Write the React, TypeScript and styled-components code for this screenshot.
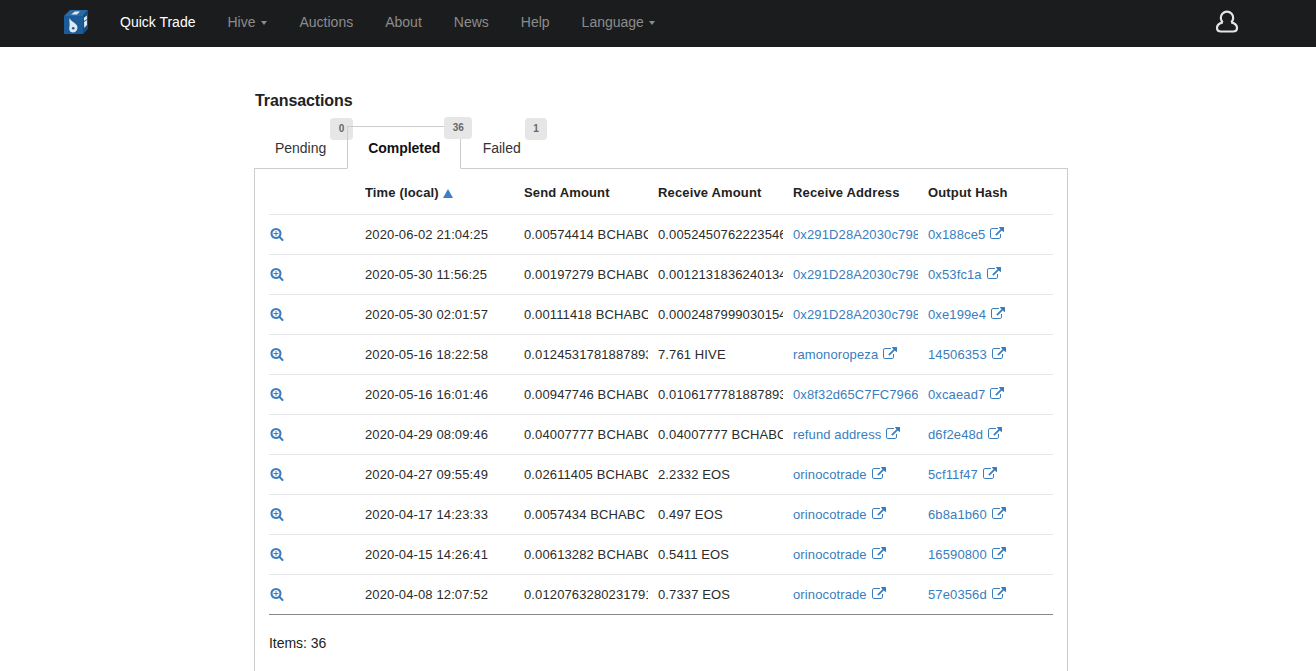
import styled, { createGlobalStyle } from 'styled-components';

const GlobalStyle = createGlobalStyle`
  html, body {
    margin: 0;
    height: 671px;
    overflow: hidden;
    background: #fff;
  }
  body {
    font-family: "Liberation Sans", Arial, sans-serif;
    font-size: 14px;
    line-height: 20px;
    color: #222;
  }
`;

const Navbar = styled.nav`
  display: flex;
  align-items: center;
  height: 47px;
  padding: 0 64px 3px;
  box-sizing: border-box;
  background-color: #1b1c1e;
`;
const Logo = styled.svg`
  width: 24px;
  height: 24px;
  margin: 0 16px 0 0;
  flex: none;
`;
const NavItem = styled.a<{ $active?: boolean }>`
  display: flex;
  align-items: center;
  padding: 0 16px;
  color: ${(p) => (p.$active ? '#fff' : '#8c8c8c')};
  white-space: nowrap;
`;
const Caret = styled.span`
  width: 0;
  height: 0;
  margin: 2px 1px 0 5px;
  border-left: 3px solid transparent;
  border-right: 3px solid transparent;
  border-top: 4px solid #8c8c8c;
`;
const UserIcon = styled.svg`
  width: 24px;
  height: 24px;
  margin-left: auto;
  margin-right: 13px;
  color: #e4e4e4;
`;

const Main = styled.main`
  width: 814px;
  margin-left: 254px;
  padding-top: 44px;
`;
const Title = styled.h4`
  margin: 0 0 15px;
  padding-left: 1px;
  font-size: 16px;
  line-height: 20px;
  font-weight: bold;
  letter-spacing: -0.1px;
  color: #222;
`;
const Tabs = styled.div`
  display: flex;
  height: 43px;
  margin-bottom: -1px;
`;
const Tab = styled.div<{ $active?: boolean }>`
  position: relative;
  padding: 11px 20px;
  margin-right: ${(p) => (p.$active ? '0.5px' : '0')};
  border: 1px solid ${(p) => (p.$active ? '#ccc' : 'transparent')};
  border-bottom: 1px solid ${(p) => (p.$active ? '#fff' : 'transparent')};
  letter-spacing: -0.03px;
  font-weight: ${(p) => (p.$active ? 'bold' : 'normal')};
  color: ${(p) => (p.$active ? '#111' : '#333')};
`;
const Badge = styled.span<{ $active?: boolean }>`
  position: absolute;
  left: calc(100% - 16px);
  top: ${(p) => (p.$active ? '-10px' : '-9px')};
  height: 22px;
  padding: 0 8.5px;
  border-radius: 4px;
  background: #e6e6e6;
  color: #666;
  font-size: 10px;
  font-weight: bold;
  letter-spacing: 0;
  line-height: 22px;
`;
const Panel = styled.section`
  height: 560px;
  padding: 0 14px;
  border: 1px solid #ccc;
`;
const Row = styled.div<{ $head?: boolean; $last?: boolean }>`
  display: grid;
  grid-template-columns: 96px 159px 134px 135px 135px 125px;
  align-items: center;
  height: ${(p) => (p.$head ? '46px' : '40px')};
  box-sizing: border-box;
  border-bottom: 1px solid ${(p) => (p.$last ? '#888' : '#e6e6e6')};
  font-size: 13px;
  letter-spacing: ${(p) => (p.$head ? '0.15px' : '0.12px')};
  font-weight: ${(p) => (p.$head ? 'bold' : 'normal')};
  color: ${(p) => (p.$head ? '#222' : '#2b2b2b')};
`;
const Cell = styled.div`
  overflow: hidden;
  white-space: nowrap;
  margin-right: 10px;
`;
const HeadCell = styled(Cell)`
  display: flex;
  align-items: center;
  padding-top: 3px;
`;
const SortMark = styled.span`
  width: 0;
  height: 0;
  margin-left: 4px;
  border-left: 5px solid transparent;
  border-right: 5px solid transparent;
  border-bottom: 9px solid #3f7fc4;
`;
const Link = styled.a`
  color: #3a7dbd;
`;
const ZoomIcon = styled.svg`
  display: block;
  width: 14px;
  height: 14px;
  margin: 0 0 2px 1px;
  fill: #3a7dbd;
`;
const ExternalIcon = styled.svg`
  width: 14px;
  height: 14px;
  margin-left: 5px;
  vertical-align: -2px;
  fill: #3a7dbd;
`;
const Items = styled.p`
  margin: 18px 0 0;
  letter-spacing: -0.05px;
  color: #222;
`;

const External = () => (
  <ExternalIcon viewBox="0 0 1792 1792">
    <path d="M1408 928v320q0 119-84.500 203.500t-203.500 84.500h-832q-119 0-203.500-84.500t-84.500-203.500v-832q0-119 84.500-203.500t203.500-84.500h704q14 0 23 9t9 23v64q0 14-9 23t-23 9h-704q-66 0-113 47t-47 113v832q0 66 47 113t113 47h832q66 0 113-47t47-113v-320q0-14 9-23t23-9h64q14 0 23 9t9 23zm384-864v512q0 26-19 45t-45 19-45-19l-176-176-652 652q-10 10-23 10t-23-10l-114-114q-10-10-10-23t10-23l652-652-176-176q-19-19-19-45t19-45 45-19h512q26 0 45 19t19 45z" />
  </ExternalIcon>
);

const SearchPlus = () => (
  <ZoomIcon viewBox="0 0 1792 1792">
    <path d="M1088 800v64q0 13-9.500 22.500t-22.500 9.500h-224v224q0 13-9.500 22.500t-22.500 9.500h-64q-13 0-22.500-9.500t-9.500-22.500v-224h-224q-13 0-22.500-9.500t-9.500-22.500v-64q0-13 9.500-22.500t22.500-9.500h224v-224q0-13 9.500-22.500t22.500-9.500h64q13 0 22.500 9.500t9.500 22.500v224h224q13 0 22.500 9.500t9.500 22.500zm128 32q0-185-131.500-316.500t-316.500-131.500-316.500 131.500-131.500 316.500 131.500 316.500 316.500 131.500 316.500-131.500 131.500-316.500zm512 832q0 53-37.500 90.500t-90.500 37.500q-54 0-90-38l-343-342q-179 124-399 124-143 0-273.500-55.500t-225-150-150-225-55.500-273.500 55.500-273.500 150-225 225-150 273.500-55.500 273.500 55.500 225 150 150 225 55.500 273.500q0 220-124 399l343 343q37 37 37 90z" />
  </ZoomIcon>
);

const rows = [
  ['2020-06-02 21:04:25', '0.00574414 BCHABC', '0.00524507622235462 BCHABC', '0x291D28A2030c79813f1', '0x188ce5'],
  ['2020-05-30 11:56:25', '0.00197279 BCHABC', '0.00121318362401342 BCHABC', '0x291D28A2030c79813f1', '0x53fc1a'],
  ['2020-05-30 02:01:57', '0.00111418 BCHABC', '0.00024879990301542 BCHABC', '0x291D28A2030c79813f1', '0xe199e4'],
  ['2020-05-16 18:22:58', '0.01245317818878931 BCHABC', '7.761 HIVE', 'ramonoropeza', '14506353'],
  ['2020-05-16 16:01:46', '0.00947746 BCHABC', '0.01061777818878931 BCHABC', '0x8f32d65C7FC7966a2b1', '0xcaead7'],
  ['2020-04-29 08:09:46', '0.04007777 BCHABC', '0.04007777 BCHABC', 'refund address', 'd6f2e48d'],
  ['2020-04-27 09:55:49', '0.02611405 BCHABC', '2.2332 EOS', 'orinocotrade', '5cf11f47'],
  ['2020-04-17 14:23:33', '0.0057434 BCHABC', '0.497 EOS', 'orinocotrade', '6b8a1b60'],
  ['2020-04-15 14:26:41', '0.00613282 BCHABC', '0.5411 EOS', 'orinocotrade', '16590800'],
  ['2020-04-08 12:07:52', '0.01207632802317917 BCHABC', '0.7337 EOS', 'orinocotrade', '57e0356d'],
];

const shortLinks = ['ramonoropeza', 'refund address', 'orinocotrade'];

const App = (): JSX.Element => {
  return (
    <>
      <GlobalStyle />
      <Navbar>
        <Logo viewBox="0 0 24 24">
          <polygon points="0,6 6,0 24,0 19,6" fill="#2a6ba6" />
          <polygon points="19,6 24,0 24,19 19,24" fill="#174c7e" />
          <rect x="0" y="6" width="19" height="18" fill="#1b5c98" />
          <path d="M5.500 8 C6.500 11 11 12.500 13 15.500 C14.500 19 12 22.500 9 22.500 C6 22.500 4.500 19.500 5.500 16.500 C6 14 5 11 5.500 8 Z" fill="#dfe9f3" />
          <circle cx="9.200" cy="18.200" r="1.300" fill="#1b5c98" />
          <path d="M19.800 8 L22.800 5.500 L23 9 L20.200 11 Z M20 12 L23 10 L23 15 L20.200 18 Z" fill="#dfe9f3" />
          <path d="M7 4.500 L11 1.500 L16 1.500 L13 4.500 Z" fill="#dfe9f3" />
        </Logo>
        <NavItem $active>Quick Trade</NavItem>
        <NavItem>Hive<Caret /></NavItem>
        <NavItem>Auctions</NavItem>
        <NavItem>About</NavItem>
        <NavItem>News</NavItem>
        <NavItem>Help</NavItem>
        <NavItem>Language<Caret /></NavItem>
        <UserIcon viewBox="0 0 24 24" fill="none" stroke="currentColor" strokeWidth="2.200">
          <path d="M7.800 12.300 A6.200 6.200 0 1 1 16.200 12.300" />
          <path d="M7.800 12.300 C4.500 13 2 15 2 18 C2 20.500 3.500 21.500 6 21.500 H18 C20.500 21.500 22 20.500 22 18 C22 15 19.500 13 16.200 12.300" />
        </UserIcon>
      </Navbar>

      <Main>
        <Title>Transactions</Title>
        <Tabs>
          <Tab>Pending<Badge>0</Badge></Tab>
          <Tab $active>Completed<Badge $active>36</Badge></Tab>
          <Tab>Failed<Badge>1</Badge></Tab>
        </Tabs>
        <Panel>
          <Row $head>
            <HeadCell />
            <HeadCell>Time (local)<SortMark /></HeadCell>
            <HeadCell>Send Amount</HeadCell>
            <HeadCell>Receive Amount</HeadCell>
            <HeadCell>Receive Address</HeadCell>
            <HeadCell>Output Hash</HeadCell>
          </Row>
          {rows.map((r, i) => (
            <Row key={r[0]} $last={i === rows.length - 1}>
              <Cell><SearchPlus /></Cell>
              <Cell>{r[0]}</Cell>
              <Cell>{r[1]}</Cell>
              <Cell>{r[2]}</Cell>
              <Cell>
                <Link>{r[3]}</Link>
                {shortLinks.includes(r[3]) && <External />}
              </Cell>
              <Cell><Link>{r[4]}</Link><External /></Cell>
            </Row>
          ))}
          <Items>Items: 36</Items>
        </Panel>
      </Main>
    </>
  );
};

export default App;
